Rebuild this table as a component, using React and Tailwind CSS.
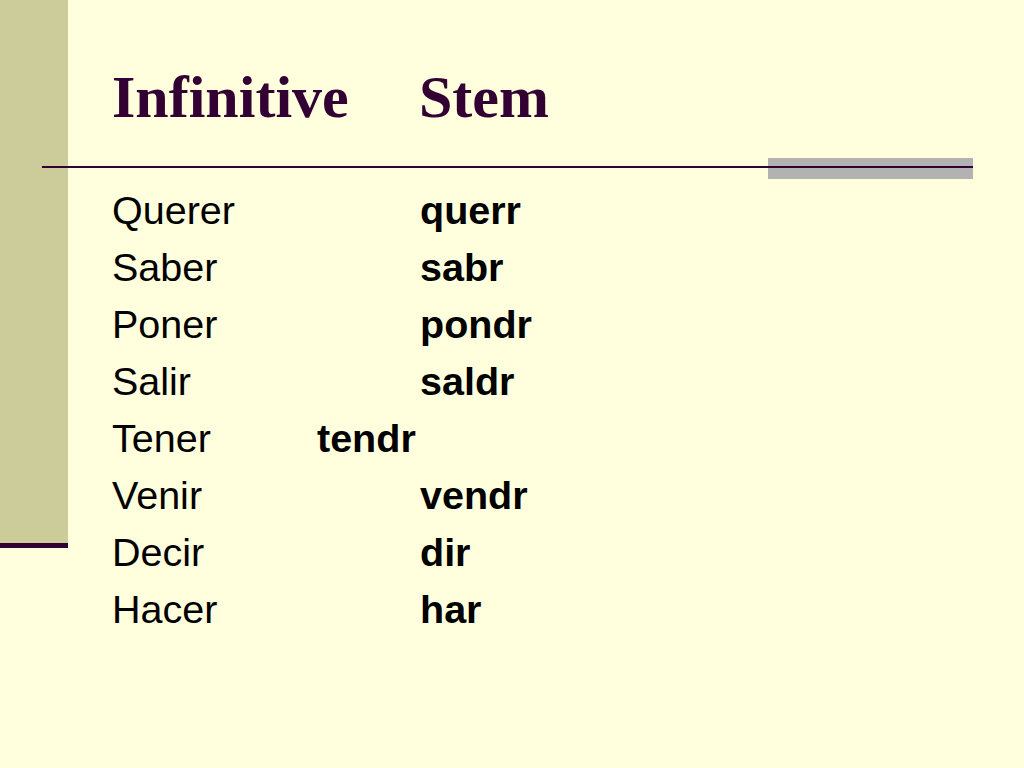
const rows = [
  { inf: 'Querer', stem: 'querr' },
  { inf: 'Saber', stem: 'sabr' },
  { inf: 'Poner', stem: 'pondr' },
  { inf: 'Salir', stem: 'saldr' },
  { inf: 'Tener', stem: 'tendr', short: true },
  { inf: 'Venir', stem: 'vendr' },
  { inf: 'Decir', stem: 'dir' },
  { inf: 'Hacer', stem: 'har' },
];

export default function App() {
  return (
    <div className="flex w-[1024px] h-[768px] bg-[#ffffdd] overflow-hidden">
      {/* left rail */}
      <div className="flex flex-col w-[68px] shrink-0">
        <div className="h-[543px] bg-[#cccc9a]" />
        <div className="h-[5px] bg-[#330033]" />
      </div>

      <div className="flex flex-col flex-1">
        <h1 className="flex mt-[67px] pl-[44px] text-[60px] leading-[60px] font-bold text-[#330033] font-['Liberation_Serif',serif]">
          <span className="w-[307px]">Infinitive</span>
          <span>Stem</span>
        </h1>

        {/* rule */}
        <div className="flex items-start h-[21px] mt-[31px] -ml-[26px]">
          <div className="w-[726px] h-[2px] mt-[8px] bg-[#330033]" />
          <div className="w-[205px] h-[21px] pt-[8px] bg-[#b2b2b2]">
            <div className="w-full h-[2px] bg-[#330033]" />
          </div>
        </div>

        <div className="flex flex-col mt-[3px] pl-[44px] text-[39.5px] leading-[57px] text-black font-['Liberation_Sans',Arial,sans-serif]">
          {rows.map((r) => (
            <div key={r.inf} className="flex">
              <span className={r.short ? 'w-[205px]' : 'w-[308px]'}>{r.inf}</span>
              <span className="font-bold">{r.stem}</span>
            </div>
          ))}
        </div>
      </div>
    </div>
  );
}
